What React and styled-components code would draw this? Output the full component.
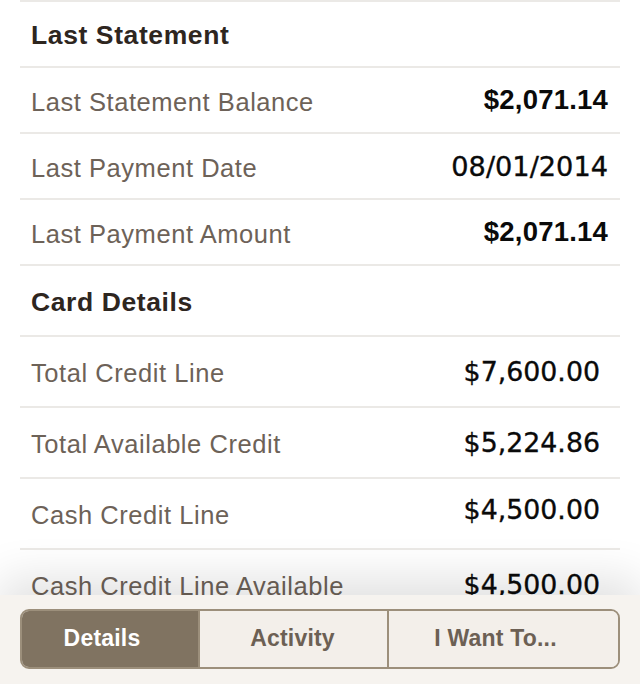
import React from "react";
import styled, { createGlobalStyle } from "styled-components";

const GlobalStyle = createGlobalStyle`
  html, body {
    margin: 0;
    padding: 0;
    background: #ffffff;
  }
  body {
    font-family: "Liberation Sans", Arial, sans-serif;
  }
`;

const Page = styled.div`
  width: 640px;
  height: 684px;
  display: flex;
  flex-direction: column;
  overflow: hidden;
  background: #ffffff;
`;

const Content = styled.div`
  flex: 1;
  min-height: 0;
  overflow: hidden;
  padding: 0 20px;
`;

const Row = styled.div`
  box-sizing: border-box;
  height: ${(p) => p.$height}px;
  display: flex;
  align-items: center;
  justify-content: space-between;
  padding: 0 ${(p) => p.$padRight}px 0 11px;
  border-top: 2px solid #ebe9e6;
`;

const Heading = styled.h2`
  margin: 0;
  padding-top: 3px;
  font-size: 26.5px;
  font-weight: 700;
  letter-spacing: 0.6px;
  color: #2e261f;
`;

const Label = styled.span`
  padding-top: 4px;
  font-size: 25.5px;
  letter-spacing: 0.55px;
  color: #6d6258;
`;

const Value = styled.span`
  color: #0a0a0a;
  font-family: ${(p) =>
    p.$kind === "bold"
      ? `"Liberation Sans", Arial, sans-serif`
      : `"DejaVu Sans", Verdana, sans-serif`};
  font-weight: ${(p) => (p.$kind === "bold" ? 700 : 400)};
  font-size: ${(p) => p.$size}px;
  letter-spacing: ${(p) => (p.$kind === "bold" ? 0.2 : 0)}px;
  -webkit-text-stroke: ${(p) => (p.$kind === "bold" ? 0 : 0.35)}px #0a0a0a;
  margin-bottom: ${(p) => p.$lift || 0}px;
`;

const BottomBar = styled.div`
  position: relative;
  z-index: 1;
  flex: 0 0 89px;
  box-sizing: border-box;
  padding: 14px 20px 15px;
  background: #f6f3ef;
  box-shadow: 0 -16px 46px rgba(0, 0, 0, 0.12);
`;

const Segmented = styled.div`
  display: grid;
  grid-template-columns: 176px 189px 1fr;
  height: 100%;
  box-sizing: border-box;
  border: 2px solid #9c8f7b;
  border-radius: 9px;
  overflow: hidden;
`;

const Segment = styled.button`
  border: none;
  border-left: ${(p) => (p.$first ? "none" : "2px solid #9c8f7b")};
  margin: 0;
  padding: 0 ${(p) => p.$nudge || 0}px 2px 0;
  font-family: "Liberation Sans", Arial, sans-serif;
  font-size: 23px;
  font-weight: 700;
  letter-spacing: 0.2px;
  color: ${(p) => (p.$active ? "#ffffff" : "#6c6054")};
  background: ${(p) => (p.$active ? "#807361" : "#f3efea")};
`;

const sections = [
  {
    title: "Last Statement",
    height: 66,
    padRight: 12,
    rows: [
      { label: "Last Statement Balance", value: "$2,071.14", kind: "bold", size: 27.5 },
      { label: "Last Payment Date", value: "08/01/2014", kind: "plain", size: 27.2 },
      { label: "Last Payment Amount", value: "$2,071.14", kind: "bold", size: 27.5 },
    ],
  },
  {
    title: "Card Details",
    height: 71,
    padRight: 20,
    rows: [
      { label: "Total Credit Line", value: "$7,600.00", kind: "plain", size: 26.8 },
      { label: "Total Available Credit", value: "$5,224.86", kind: "plain", size: 26.8 },
      { label: "Cash Credit Line", value: "$4,500.00", kind: "plain", size: 26.8, lift: 8 },
      { label: "Cash Credit Line Available", value: "$4,500.00", kind: "plain", size: 26.8 },
    ],
  },
];

const tabs = [
  { name: "Details", nudge: 16 },
  { name: "Activity", nudge: 2 },
  { name: "I Want To...", nudge: 16 },
];

export default function App() {
  return (
    <Page>
      <GlobalStyle />
      <Content>
        {sections.map((s) => (
          <section key={s.title}>
            <Row $height={s.height} $padRight={s.padRight}>
              <Heading>{s.title}</Heading>
            </Row>
            {s.rows.map((r) => (
              <Row key={r.label} $height={s.height} $padRight={s.padRight}>
                <Label>{r.label}</Label>
                <Value $kind={r.kind} $size={r.size} $lift={r.lift}>
                  {r.value}
                </Value>
              </Row>
            ))}
          </section>
        ))}
      </Content>
      <BottomBar>
        <Segmented>
          {tabs.map((t, i) => (
            <Segment key={t.name} $first={i === 0} $active={i === 0} $nudge={t.nudge}>
              {t.name}
            </Segment>
          ))}
        </Segmented>
      </BottomBar>
    </Page>
  );
}
